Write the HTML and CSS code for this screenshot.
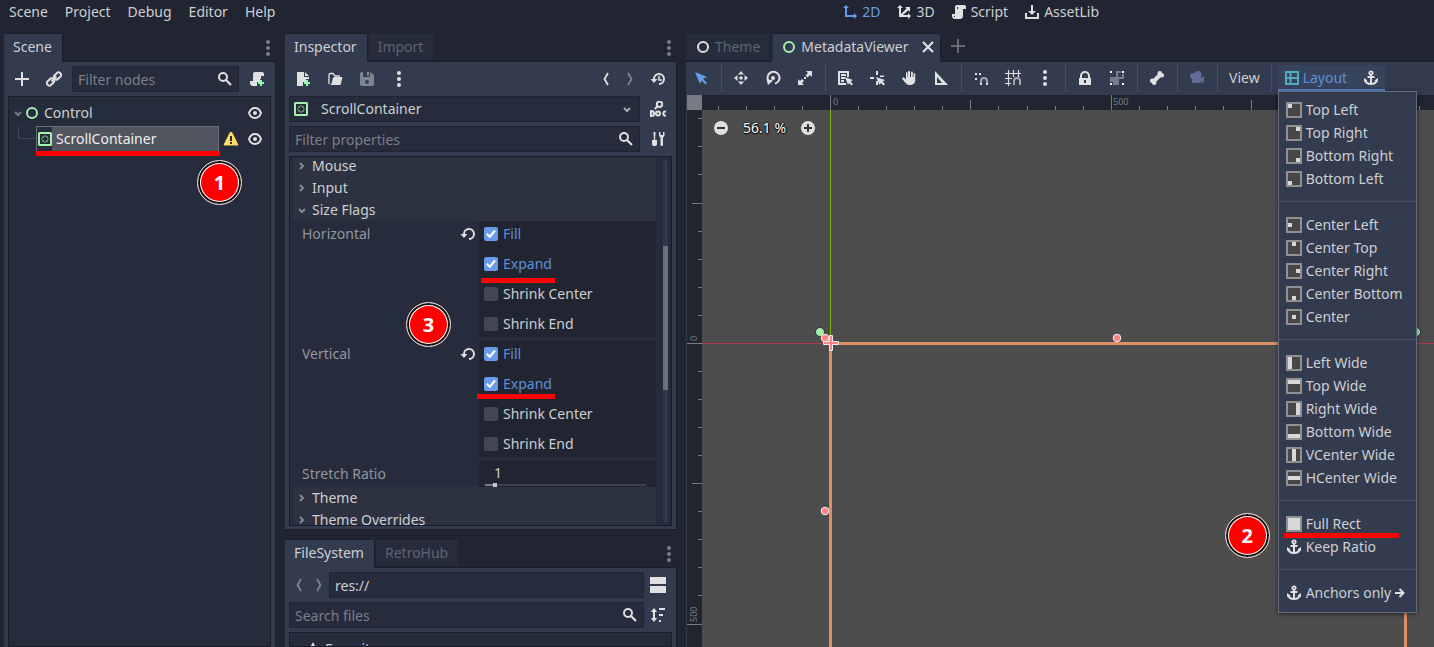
FILE: index.html
```html
<!DOCTYPE html>
<html lang="en">
<head>
<meta charset="utf-8">
<title>Godot Editor</title>
<link rel="stylesheet" href="styles.css">
</head>
<body>
<svg class="sprite" aria-hidden="true">
  <symbol id="dots" viewBox="0 0 16 16"><g fill="currentColor"><circle cx="8" cy="2" r="2"/><circle cx="8" cy="8" r="2"/><circle cx="8" cy="14" r="2"/></g></symbol>
  <symbol id="add" viewBox="0 0 16 16"><path fill="currentColor" d="M7 1h2v6h6v2H9v6H7V9H1V7h6z"/></symbol>
  <symbol id="link" viewBox="0 0 16 16"><g fill="none" stroke="currentColor" stroke-width="2"><rect x="7.5" y="2.5" width="8" height="5" rx="2.5" transform="rotate(-45 11.500 5)"/><rect x=".5" y="8.500" width="8" height="5" rx="2.500" transform="rotate(-45 4.500 11)"/><path d="M5.500 10.500l5-5"/></g></symbol>
  <symbol id="search" viewBox="0 0 16 16"><circle cx="6" cy="6" r="4" fill="none" stroke="currentColor" stroke-width="2"/><path d="M9 9l5 5" stroke="currentColor" stroke-width="2.200"/></symbol>
  <symbol id="script" viewBox="0 0 16 16"><path fill="currentColor" d="M6 1C4.900 1 4 1.900 4 3v7H1v2c0 1.700 1.300 3 3 3h5c1.700 0 3-1.300 3-3V5h3V3c0-1.100-.9-2-2-2z"/><path d="M6.500 3v2M3.500 12v1" stroke="#262c3b" stroke-width="1"/></symbol>
  <symbol id="script-add" viewBox="0 0 16 16"><path fill="currentColor" d="M6 1C4.900 1 4 1.900 4 3v7H1v2c0 1.700 1.300 3 3 3h4v-4h3V8h1V5h3V3c0-1.100-.9-2-2-2z"/><path fill="#84ffb1" d="M11 9h2v2h2v2h-2v2h-2v-2H9v-2h2z"/></symbol>
  <symbol id="ring" viewBox="0 0 16 16"><circle cx="8" cy="8" r="5" fill="none" stroke="currentColor" stroke-width="2"/></symbol>
  <symbol id="container" viewBox="0 0 16 16"><rect x="2" y="2" width="12" height="12" rx=".5" fill="none" stroke="#a5efac" stroke-width="2"/><path d="M5.500 6.500l1-1M9.500 5.500l1 1M10.500 9.500l-1 1M6.500 10.500l-1-1M7.500 5h1M7.500 11h1M5 7.500v1M11 7.500v1" fill="none" stroke="#a5efac" stroke-width="1.300"/></symbol>
  <symbol id="eye" viewBox="0 0 16 16"><circle cx="8" cy="8" r="2" fill="currentColor"/><path d="M2 8c1.200-3.500 3.400-5 6-5s4.800 1.500 6 5c-1.200 3.500-3.400 5-6 5S3.200 11.500 2 8z" fill="none" stroke="currentColor" stroke-width="2"/></symbol>
  <symbol id="warn" viewBox="0 0 16 16"><path fill="#ffdd65" d="M7.200 1.500h1.600L15 14H1z" stroke="#ffdd65" stroke-linejoin="round"/><path fill="#262c3b" d="M7 5h2v5H7zM7 11h2v2H7z"/></symbol>
  <symbol id="down" viewBox="0 0 16 16"><path d="M5 7l3 3 3-3" fill="none" stroke="currentColor" stroke-width="2"/></symbol>
  <symbol id="right" viewBox="0 0 16 16"><path d="M6 5l3 3-3 3" fill="none" stroke="currentColor" stroke-width="2"/></symbol>
  <symbol id="back" viewBox="0 0 16 16"><path d="M10 2L6.500 8l3.500 6" fill="none" stroke="currentColor" stroke-width="1.800"/></symbol>
  <symbol id="forward" viewBox="0 0 16 16"><path d="M6 2l3.500 6L6 14" fill="none" stroke="currentColor" stroke-width="1.800"/></symbol>
  <symbol id="new" viewBox="0 0 16 16"><path fill="currentColor" d="M2 1h7v5h5v2h-3v3H8v4H2zM10 1l4 4h-4z"/><path fill="#84ffb1" d="M11 9h2v2h2v2h-2v2h-2v-2H9v-2h2z"/></symbol>
  <symbol id="open" viewBox="0 0 16 16"><path d="M2 13V4c0-1 .4-1.500 1.500-1.500H6L8 5h5" fill="none" stroke="currentColor" stroke-width="1.300"/><path fill="currentColor" d="M7 6h8.500l-2 8H2.500c1.500-.5 2-1 2.300-2.500L6 7z"/></symbol>
  <symbol id="save" viewBox="0 0 16 16"><path fill="currentColor" fill-rule="evenodd" d="M1 3c0-1.100.9-2 2-2h1v5h7V1l4 3v9c0 1.100-.9 2-2 2H3c-1.100 0-2-.9-2-2zM8 9a2 2 0 100 4 2 2 0 000-4zM8 1h2v4H8z"/></symbol>
  <symbol id="history" viewBox="0 0 16 16"><path d="M4 9V8a5 5 0 115 5" fill="none" stroke="currentColor" stroke-width="2"/><path fill="currentColor" d="M.5 8h7L4 12z"/><path d="M9 5v4h3" fill="none" stroke="currentColor" stroke-width="1.600"/></symbol>
  <symbol id="doc" viewBox="0 0 16 16"><circle cx="9.500" cy="3.200" r="2.700" fill="none" stroke="currentColor" stroke-width="2"/><path d="M7.500 5.200L4.800 8" stroke="currentColor" stroke-width="2"/><g fill="none" stroke="currentColor" stroke-width="2"><path d="M1 10v5h.5c3.400 0 3.400-5 0-5z"/><path d="M16 10.500c-3.600-1-3.600 5 0 4"/><circle cx="8" cy="12.500" r="2"/></g></symbol>
  <symbol id="tools" viewBox="0 0 16 16"><path fill="currentColor" d="M3.500 1h2v3L5.200 5v4H7v4c0 1.500-1 2-2.500 2S2 14.500 2 13V9h1.800V5l-.3-1zM9 1v3c0 1.300.6 2 1.500 2.500V14c0 1.300 2.500 1.300 2.500 0V6.500C14 6 14.500 5.300 14.500 4V1H13v3h-2.500V1z"/></symbol>
  <symbol id="revert" viewBox="0 0 16 16"><path d="M4 9V8a5 5 0 115 5" fill="none" stroke="currentColor" stroke-width="2"/><path fill="currentColor" d="M.5 8h7L4 12z"/></symbol>
  <symbol id="split" viewBox="0 0 16 16"><path fill="currentColor" d="M0 0h16v7H0zM0 9h16v7H0z"/></symbol>
  <symbol id="sort" viewBox="0 0 16 16"><path fill="currentColor" d="M4 1l3.200 4H5v6h2.200L4 15 .8 11H3V5H.8zM9 1h6v2H9zM9 7h4v2H9zM9 13h2v2H9z"/></symbol>
  <symbol id="star" viewBox="0 0 16 16"><path fill="currentColor" d="M8 1l2.300 4.500 5 .8-3.600 3.500.8 5L8 12.500l-4.500 2.300.8-5L.7 6.300l5-.8z"/></symbol>
  <symbol id="two" viewBox="0 0 16 16"><path fill="currentColor" d="M4 1l3 3H5v7h7V9l3 3-3 3v-2H3V4H1z"/></symbol>
  <symbol id="three" viewBox="0 0 16 16"><path fill="currentColor" d="M4 1l3 3H5v6l5.500-5.500L9 3h5v5l-1.500-1.800L7 11h5V9l3 3-3 3v-2H3V4H1z"/></symbol>
  <symbol id="asset" viewBox="0 0 16 16"><path fill="currentColor" d="M7 1h2v6h3l-4 4-4-4h3zM1 9h2v4h10V9h2v6H1z"/></symbol>
  <symbol id="close" viewBox="0 0 16 16"><path d="M3 3l10 10M13 3L3 13" stroke="currentColor" stroke-width="2.200"/></symbol>
  <symbol id="select" viewBox="0 0 16 16"><path fill="currentColor" d="M2 2l12 5-4 1.800L14 13l-1.500 1.500-4-4L7 14z"/></symbol>
  <symbol id="move" viewBox="0 0 16 16"><path fill="currentColor" d="M8 1l3 3.500H5zM8 15l3-3.500H5zM1 8l3.500-3v6zM15 8l-3.500-3v6z"/><circle cx="8" cy="8" r="1.800" fill="currentColor"/></symbol>
  <symbol id="rotate" viewBox="0 0 16 16"><path d="M4.200 12A6 6 0 1110 13.600" fill="none" stroke="currentColor" stroke-width="2"/><path fill="currentColor" d="M1.500 9.500l6 .5v1L3 15z"/><circle cx="8" cy="8" r="2" fill="currentColor"/></symbol>
  <symbol id="scale" viewBox="0 0 16 16"><path fill="currentColor" d="M9 1h6v6l-2-2-2.500 2.500-2-2L11 3zM1 9l2 2 2-2 2 2-2 2 2 2H1z"/><path fill="currentColor" d="M7 7h2v2H7z"/></symbol>
  <symbol id="list" viewBox="0 0 16 16"><path d="M9 14H2V2h9v5M4 5h5M4 8h4M4 11h3" fill="none" stroke="currentColor" stroke-width="2"/><path fill="currentColor" d="M8 7l8 3-2.500 1.500L16 14l-1.500 1.500-2.500-2.500L11 15z"/></symbol>
  <symbol id="pivot" viewBox="0 0 16 16"><path fill="currentColor" d="M7 1h2v4H7zM7 11h2v4H7zM1 7h4v2H1zM11 5.500h4v1.500h-4zM7 7l9 3-2.500 1.500L16 14l-1.500 1.500-2.500-2.500L10.500 15z"/></symbol>
  <symbol id="pan" viewBox="0 0 16 16"><path fill="currentColor" d="M8 1c.7 0 1 .4 1 1v5h1V2.500c0-1.300 1.800-1.300 1.800 0V7h.7V4c0-1.200 1.700-1.200 1.700 0v6.500C14.200 13.300 12 15 9 15c-3.500 0-4.500-2-6.500-4.500L1 8.500c0-1.500 2-1.500 3 0l1 1V3c0-1.200 1.500-1.200 1.500 0v4H7V2c0-.6.300-1 1-1z"/></symbol>
  <symbol id="ruler" viewBox="0 0 16 16"><path fill="currentColor" fill-rule="evenodd" d="M2 1l13 14H2zM4 7v6h5z"/></symbol>
  <symbol id="snap" viewBox="0 0 16 16"><path fill="currentColor" d="M2 3h2v2H2zM2 8h2v2H2zM6 3h2v2H6z"/><path d="M8 15v-4a3 3 0 016 0v4" fill="none" stroke="currentColor" stroke-width="2" opacity=".65"/><path d="M7 13h2v2H7zM13 13h2v2h-2z" fill="currentColor"/></symbol>
  <symbol id="snap-grid" viewBox="0 0 16 16"><path d="M0 3.500h16M0 8.500h7M0 13.500h6M3.500 0v16M8.500 0v7M13.500 0v7" stroke="currentColor" stroke-width="1.200"/><path d="M9 15v-4a3 3 0 016 0v4" fill="none" stroke="currentColor" stroke-width="2" opacity=".65"/></symbol>
  <symbol id="lock" viewBox="0 0 16 16"><path fill="currentColor" fill-rule="evenodd" d="M2 8h1V6a5 5 0 0110 0v2h1v7H2zM5 8h6V6a3 3 0 00-6 0zM7 10v3h2v-3z"/></symbol>
  <symbol id="group" viewBox="0 0 16 16"><path fill="#777d8a" fill-rule="evenodd" d="M7 1h8v8h-5v6H1V7h6zM9 3v4h1v0h3V3z"/><path fill="#333b4f" d="M0 0h4v4H0zM12 0h4v4h-4zM0 12h4v4H0zM12 12h4v4h-4z"/><path fill="currentColor" d="M1 1h2v2H1zM13 1h2v2h-2zM1 13h2v2H1zM13 13h2v2h-2z"/></symbol>
  <symbol id="bone" viewBox="0 0 16 16"><path d="M4.500 11.500l7-7" stroke="currentColor" stroke-width="4"/><g fill="currentColor"><circle cx="10.800" cy="3.200" r="2.300"/><circle cx="12.800" cy="5.200" r="2.300"/><circle cx="3.200" cy="10.800" r="2.300"/><circle cx="5.200" cy="12.800" r="2.300"/></g></symbol>
  <symbol id="camera" viewBox="0 0 16 16"><g fill="#606c96"><circle cx="9" cy="4.500" r="3.500"/><circle cx="4" cy="6" r="3"/><rect x="3" y="5" width="9" height="8" rx="1"/><path d="M11 9l4-3v7l-4-2z"/></g></symbol>
  <symbol id="grid" viewBox="0 0 16 16"><path d="M2 2h12v12H2zM6.500 2v12M2 8h12" fill="none" stroke="#4fabbd" stroke-width="2"/></symbol>
  <symbol id="anchor" viewBox="0 0 16 16"><circle cx="8" cy="3" r="1.700" fill="none" stroke="currentColor" stroke-width="1.800"/><path d="M8 5v9M4.500 7h7M2 9.500C2.500 12.500 5 14 8 14s5.500-1.500 6-4.500" fill="none" stroke="currentColor" stroke-width="2"/><path fill="currentColor" d="M1 8l3.500 2.500L1 12zM15 8l-3.500 2.500L15 12z"/></symbol>
  <symbol id="arrow" viewBox="0 0 10 10"><path d="M0 5h8M4.500 1l4 4-4 4" fill="none" stroke="currentColor" stroke-width="2"/></symbol>
  <symbol id="minus-round" viewBox="0 0 16 16"><circle cx="8" cy="8" r="7" fill="#e0e0e0"/><path d="M4 8h8" stroke="#333" stroke-width="2"/></symbol>
  <symbol id="plus-round" viewBox="0 0 16 16"><circle cx="8" cy="8" r="7" fill="#e0e0e0"/><path d="M4 8h8M8 4v8" stroke="#333" stroke-width="2"/></symbol>
  <symbol id="frame" viewBox="0 0 16 16"><path fill="#474747" stroke="#919191" stroke-width="2" d="M1 1h14v14H1z"/></symbol>
</svg>

<div class="editor">
  <header class="menubar">
    <nav class="menus">
      <button>Scene</button><button>Project</button><button>Debug</button><button>Editor</button><button>Help</button>
    </nav>
    <nav class="screens">
      <button class="active"><svg class="icon"><use href="#two"/></svg>2D</button>
      <button><svg class="icon"><use href="#three"/></svg>3D</button>
      <button><svg class="icon"><use href="#script"/></svg>Script</button>
      <button><svg class="icon"><use href="#asset"/></svg>AssetLib</button>
    </nav>
  </header>

  <main class="workspace">
    <section class="dock scene-dock">
      <div class="tabs">
        <button class="tab selected">Scene</button>
        <button class="more" aria-label="Dock options"><svg class="icon"><use href="#dots"/></svg></button>
      </div>
      <div class="panel">
        <div class="tool-row">
          <button class="tool" aria-label="Add node"><svg class="icon"><use href="#add"/></svg></button>
          <button class="tool" aria-label="Instance scene"><svg class="icon"><use href="#link"/></svg></button>
          <div class="field"><input type="text" placeholder="Filter nodes" aria-label="Filter nodes"><svg class="icon"><use href="#search"/></svg></div>
          <button class="tool" aria-label="Attach script"><svg class="icon"><use href="#script-add"/></svg></button>
        </div>
        <div class="box tree">
          <div class="node">
            <svg class="icon fold"><use href="#down"/></svg>
            <span class="node-name"><svg class="icon green"><use href="#ring"/></svg>Control</span>
            <button class="mini" aria-label="Toggle Control"><svg class="icon"><use href="#eye"/></svg></button>
          </div>
          <div class="node child">
            <span class="branch"></span>
            <span class="node-name chosen"><span class="icon-bed"><svg class="icon"><use href="#container"/></svg></span>ScrollContainer<i class="mark mark-node"></i></span>
            <button class="mini" aria-label="Warning"><svg class="icon"><use href="#warn"/></svg></button>
            <button class="mini" aria-label="Toggle ScrollContainer"><svg class="icon"><use href="#eye"/></svg></button>
            <b class="step step-one">1</b>
          </div>
        </div>
      </div>
    </section>

    <div class="column">
      <section class="dock inspector-dock">
        <div class="tabs">
          <button class="tab selected">Inspector</button><button class="tab">Import</button>
          <button class="more" aria-label="Dock options"><svg class="icon"><use href="#dots"/></svg></button>
        </div>
        <div class="panel">
          <div class="tool-row">
            <button class="tool" aria-label="New resource"><svg class="icon"><use href="#new"/></svg></button>
            <button class="tool" aria-label="Open resource"><svg class="icon"><use href="#open"/></svg></button>
            <button class="tool dim" aria-label="Save resource"><svg class="icon"><use href="#save"/></svg></button>
            <button class="tool" aria-label="Resource options"><svg class="icon"><use href="#dots"/></svg></button>
            <span class="spacer"></span>
            <button class="tool narrow" aria-label="Previous object"><svg class="icon"><use href="#back"/></svg></button>
            <button class="tool narrow dim" aria-label="Next object"><svg class="icon"><use href="#forward"/></svg></button>
            <button class="tool" aria-label="History"><svg class="icon"><use href="#history"/></svg></button>
          </div>
          <div class="tool-row">
            <div class="field picker"><svg class="icon"><use href="#container"/></svg><select aria-label="Edited object"><option>ScrollContainer</option></select><svg class="icon chevron"><use href="#down"/></svg></div>
            <button class="tool" aria-label="Open documentation"><svg class="icon"><use href="#doc"/></svg></button>
          </div>
          <div class="tool-row">
            <div class="field"><input type="text" placeholder="Filter properties" aria-label="Filter properties"><svg class="icon"><use href="#search"/></svg></div>
            <button class="tool" aria-label="Tools"><svg class="icon"><use href="#tools"/></svg></button>
          </div>
          <div class="box properties">
            <div class="property-list">
              <button class="group-head"><svg class="icon"><use href="#right"/></svg>Mouse</button>
              <button class="group-head"><svg class="icon"><use href="#right"/></svg>Input</button>
              <button class="group-head"><svg class="icon"><use href="#down"/></svg>Size Flags</button>
              <div class="property">
                <span class="property-name">Horizontal<svg class="icon"><use href="#revert"/></svg></span>
                <div class="values">
                  <label class="on"><input type="checkbox" checked>Fill</label>
                  <label class="on"><input type="checkbox" checked>Expand<i class="mark mark-horizontal"></i></label>
                  <label><input type="checkbox">Shrink Center</label>
                  <label><input type="checkbox">Shrink End</label>
                </div>
                <b class="step step-three">3</b>
              </div>
              <div class="property">
                <span class="property-name">Vertical<svg class="icon"><use href="#revert"/></svg></span>
                <div class="values">
                  <label class="on"><input type="checkbox" checked>Fill</label>
                  <label class="on"><input type="checkbox" checked>Expand<i class="mark mark-vertical"></i></label>
                  <label><input type="checkbox">Shrink Center</label>
                  <label><input type="checkbox">Shrink End</label>
                </div>
              </div>
              <div class="property last">
                <label class="property-name" for="ratio">Stretch Ratio</label>
                <div class="values number"><input id="ratio" type="text" value="1"><input class="slider" type="range" min="0" max="20" value="1" aria-label="Stretch Ratio slider"></div>
              </div>
              <button class="group-head"><svg class="icon"><use href="#right"/></svg>Theme</button>
              <button class="group-head"><svg class="icon"><use href="#right"/></svg>Theme Overrides</button>
            </div>
            <div class="scrollbar"><span></span></div>
          </div>
        </div>
      </section>

      <section class="dock files-dock">
        <div class="tabs">
          <button class="tab selected">FileSystem</button><button class="tab">RetroHub</button>
          <button class="more" aria-label="Dock options"><svg class="icon"><use href="#dots"/></svg></button>
        </div>
        <div class="panel">
          <div class="tool-row">
            <button class="tool slim dim" aria-label="Back"><svg class="icon"><use href="#back"/></svg></button>
            <button class="tool slim dim" aria-label="Forward"><svg class="icon"><use href="#forward"/></svg></button>
            <div class="field path"><input type="text" value="res://" aria-label="Path"></div>
            <button class="tool side" aria-label="Split mode"><svg class="icon"><use href="#split"/></svg></button>
          </div>
          <div class="tool-row">
            <div class="field"><input type="text" placeholder="Search files" aria-label="Search files"><svg class="icon"><use href="#search"/></svg></div>
            <button class="tool side" aria-label="Sort files"><svg class="icon"><use href="#sort"/></svg></button>
          </div>
          <div class="box favorites"><svg class="icon"><use href="#star"/></svg>Favorites:</div>
        </div>
      </section>
    </div>

    <section class="viewport">
      <div class="tabs">
        <button class="tab scene-tab"><svg class="icon"><use href="#ring"/></svg>Theme</button>
        <button class="tab scene-tab selected"><svg class="icon green"><use href="#ring"/></svg>MetadataViewer<svg class="icon close"><use href="#close"/></svg></button>
        <button class="new-tab" aria-label="New scene"><svg class="icon"><use href="#add"/></svg></button>
      </div>
      <div class="toolbar">
        <button class="tool active" aria-label="Select"><svg class="icon"><use href="#select"/></svg></button>
        <span class="rule"></span>
        <button class="tool" aria-label="Move"><svg class="icon"><use href="#move"/></svg></button>
        <button class="tool" aria-label="Rotate"><svg class="icon"><use href="#rotate"/></svg></button>
        <button class="tool" aria-label="Scale"><svg class="icon"><use href="#scale"/></svg></button>
        <span class="rule"></span>
        <button class="tool" aria-label="List select"><svg class="icon"><use href="#list"/></svg></button>
        <button class="tool" aria-label="Pivot"><svg class="icon"><use href="#pivot"/></svg></button>
        <button class="tool" aria-label="Pan"><svg class="icon"><use href="#pan"/></svg></button>
        <button class="tool" aria-label="Ruler"><svg class="icon"><use href="#ruler"/></svg></button>
        <span class="rule"></span>
        <button class="tool" aria-label="Smart snap"><svg class="icon"><use href="#snap"/></svg></button>
        <button class="tool" aria-label="Grid snap"><svg class="icon"><use href="#snap-grid"/></svg></button>
        <button class="tool" aria-label="Snap options"><svg class="icon"><use href="#dots"/></svg></button>
        <span class="rule"></span>
        <button class="tool" aria-label="Lock"><svg class="icon"><use href="#lock"/></svg></button>
        <button class="tool white" aria-label="Group"><svg class="icon"><use href="#group"/></svg></button>
        <span class="rule"></span>
        <button class="tool" aria-label="Skeleton"><svg class="icon"><use href="#bone"/></svg></button>
        <span class="rule"></span>
        <button class="tool" aria-label="Camera override"><svg class="icon"><use href="#camera"/></svg></button>
        <span class="rule"></span>
        <button class="text-tool">View</button>
        <span class="rule"></span>
        <div class="layout-tools">
          <button class="text-tool layout-button"><svg class="icon"><use href="#grid"/></svg>Layout</button>
          <button class="tool" aria-label="Anchor mode"><svg class="icon"><use href="#anchor"/></svg></button>
          <div class="popup" role="menu">
            <button role="menuitem"><svg class="icon"><use href="#frame"/><path d="M2 2h4v4H2z"/></svg>Top Left</button>
            <button role="menuitem"><svg class="icon"><use href="#frame"/><path d="M10 2h4v4h-4z"/></svg>Top Right</button>
            <button role="menuitem"><svg class="icon"><use href="#frame"/><path d="M10 10h4v4h-4z"/></svg>Bottom Right</button>
            <button role="menuitem"><svg class="icon"><use href="#frame"/><path d="M2 10h4v4H2z"/></svg>Bottom Left</button>
            <hr>
            <button role="menuitem"><svg class="icon"><use href="#frame"/><path d="M2 6h4v4H2z"/></svg>Center Left</button>
            <button role="menuitem"><svg class="icon"><use href="#frame"/><path d="M6 2h4v4H6z"/></svg>Center Top</button>
            <button role="menuitem"><svg class="icon"><use href="#frame"/><path d="M10 6h4v4h-4z"/></svg>Center Right</button>
            <button role="menuitem"><svg class="icon"><use href="#frame"/><path d="M6 10h4v4H6z"/></svg>Center Bottom</button>
            <button role="menuitem"><svg class="icon"><use href="#frame"/><path d="M6 6h4v4H6z"/></svg>Center</button>
            <hr>
            <button role="menuitem"><svg class="icon"><use href="#frame"/><path d="M2 2h4v12H2z"/></svg>Left Wide</button>
            <button role="menuitem"><svg class="icon"><use href="#frame"/><path d="M2 2h12v4H2z"/></svg>Top Wide</button>
            <button role="menuitem"><svg class="icon"><use href="#frame"/><path d="M10 2h4v12h-4z"/></svg>Right Wide</button>
            <button role="menuitem"><svg class="icon"><use href="#frame"/><path d="M2 10h12v4H2z"/></svg>Bottom Wide</button>
            <button role="menuitem"><svg class="icon"><use href="#frame"/><path d="M6 2h4v12H6z"/></svg>VCenter Wide</button>
            <button role="menuitem"><svg class="icon"><use href="#frame"/><path d="M2 6h12v4H2z"/></svg>HCenter Wide</button>
            <hr>
            <button role="menuitem"><svg class="icon"><use href="#frame"/><path d="M2 2h12v12H2z"/></svg>Full Rect<i class="mark mark-full"></i><b class="step step-two">2</b></button>
            <button role="menuitem"><svg class="icon"><use href="#anchor"/></svg>Keep Ratio</button>
            <hr>
            <button role="menuitem"><svg class="icon"><use href="#anchor"/></svg>Anchors only<svg class="submenu"><use href="#arrow"/></svg></button>
          </div>
        </div>
      </div>
      <div class="canvas">
        <svg class="stage">
          <path stroke="#79b20f" d="M143.500 15V248"/>
          <path stroke="#b03a50" d="M15 248.500H3000"/>
          <path fill="none" stroke="#de9064" stroke-width="3" d="M143.500 248.500H718.500V585H143.500z"/>
          <g class="anchors"><circle cx="133" cy="237" r="4.500"/><circle cx="729" cy="237" r="4.500"/></g>
          <g class="handles"><circle cx="138" cy="243" r="3.800"/><circle cx="430" cy="243" r="3.800"/><circle cx="138" cy="416" r="3.800"/></g>
          <path fill="#ff8484" stroke="#eee" d="M142.500 240.500h3v6h6v3h-6v6h-3v-6h-6v-3h6z"/>
          <path fill="#202531" d="M0 0H3000V15H15V3000H0z"/>
          <path fill="#777b86" d="M0 0h15v15H0z"/>
          <path class="ticks" d="M31.500 11v4M59.500 11v4M87.500 11v4M115.500 11v4M143.500 0v15M171.500 11v4M199.500 11v4M227.500 11v4M255.500 11v4M283.500 5v10M311.500 11v4M340.500 11v4M368.500 11v4M396.500 11v4M424.500 0v15M452.500 11v4M480.500 11v4M508.500 11v4M536.500 11v4M564.500 5v10M732.500 11v4"/>
          <path class="ticks" d="M11 23.500h4M11 51.500h4M11 79.500h4M5 108.500h10M11 136.500h4M11 164.500h4M11 192.500h4M11 220.500h4M0 248.500h15M11 276.500h4M11 304.500h4M11 332.500h4M11 360.500h4M5 388.500h10M11 416.500h4M11 444.500h4M11 472.500h4M11 500.500h4M0 529.500h15"/>
          <g class="ruler-text"><text x="146" y="10">0</text><text x="426" y="10">500</text><text transform="translate(10 246) rotate(-90)">0</text><text transform="translate(10 527) rotate(-90)">500</text></g>
        </svg>
        <div class="zoom">
          <button aria-label="Zoom out"><svg class="icon"><use href="#minus-round"/></svg></button>
          <button class="percent">56.1 %</button>
          <button aria-label="Zoom in"><svg class="icon"><use href="#plus-round"/></svg></button>
        </div>
      </div>
    </section>
  </main>
</div>
</body>
</html>
```

FILE: styles.css
```css
:root {
  --base: #333b4f;
  --dark: #262c3b;
  --darker: #202531;
  --edge: #191d27;
  --text: #cdcfd2;
  --accent: #699ce8;
  --link: #5f8fd9;
}
* { box-sizing: border-box; }
body {
  margin: 0;
  background: var(--darker);
  color: var(--text);
  font: 14px/20px "Noto Sans", sans-serif;
}
button, input, select {
  margin: 0;
  padding: 0;
  border: 0;
  background: none;
  color: inherit;
  font: inherit;
  outline: 0;
}
button { white-space: nowrap; }
.sprite { position: absolute; width: 0; height: 0; }
.icon { display: block; flex: none; width: 16px; height: 16px; color: #e0e0e0; }
.green { color: #a5efac; }

.editor { display: flex; flex-direction: column; height: 100vh; overflow: hidden; }
.menubar { display: flex; justify-content: space-between; height: 34px; padding: 2px 335px 0 9px; }
.menus, .screens { display: flex; align-items: flex-start; gap: 16px; }
.menus { gap: 17px; }
.screens button { display: flex; align-items: center; gap: 4px; }
.screens .active, .screens .active .icon { color: var(--accent); }

.workspace { display: flex; flex: 1; gap: 9px; min-height: 0; padding-left: 4px; }
.column { display: flex; flex-direction: column; flex: none; gap: 10px; width: 392px; min-height: 0; }
.dock { display: flex; flex-direction: column; min-height: 0; }
.scene-dock { flex: none; width: 272px; }
.inspector-dock { flex: 1; }
.files-dock { flex: none; height: 107px; }

.tabs { display: flex; flex: none; height: 27px; gap: 2px; }
.tab {
  height: 26px;
  padding: 0 10px 0 9px;
  background: var(--dark);
  color: #5f6470;
}
.tab.selected {
  position: relative;
  height: 28px;
  padding-bottom: 2px;
  background: var(--base);
  color: var(--text);
  box-shadow: 0 -1px 0 var(--edge), 1px 0 0 var(--edge);
  clip-path: inset(-1px -1px 0 0);
}
.more { margin-left: auto; }
.more .icon { color: #7a7d86; }
.panel {
  display: flex;
  flex-direction: column;
  flex: 1;
  gap: 4px;
  min-height: 0;
  padding: 4px;
  background: var(--base);
  border: solid var(--edge);
  border-width: 1px 1px 1px 0;
}
.inspector-dock .panel { padding-bottom: 3px; }
.scene-dock .panel, .files-dock .panel { padding-bottom: 0; border-bottom: 0; }
.tool-row { display: flex; flex: none; align-items: center; gap: 4px; height: 26px; }
.tool { display: flex; flex: none; align-items: center; justify-content: center; width: 28px; height: 26px; }
.narrow { width: 20px; }
.slim { width: 16px; }
.slim:first-child { margin-left: 2px; }
.side { width: 24px; padding-right: 4px; }
.dim .icon { color: #7f8490; }
.spacer { flex: 1; }
.field {
  display: flex;
  flex: 1;
  align-items: center;
  min-width: 0;
  height: 26px;
  padding: 0 5px;
  background: var(--dark);
  border: 1px solid var(--darker);
}
.path { margin-left: -2px; }
.field input, .field select { flex: 1; min-width: 0; height: 24px; appearance: none; }
.field input::placeholder { color: #7b7f89; opacity: 1; }
.picker { gap: 12px; padding: 0 4px 0 3px; }
.chevron { color: #a9acb3; }
.box { flex: 1; min-height: 0; background: var(--dark); border: 1px solid var(--edge); }

.tree { padding: 3px 7px 0 1px; }
.node { position: relative; display: flex; align-items: center; height: 26px; }
.fold { color: #777b86; }
.node-name { display: flex; flex: 1; align-items: center; gap: 4px; height: 26px; margin-left: -2px; }
.branch {
  flex: none;
  align-self: flex-start;
  width: 18px;
  height: 13px;
  margin-left: 8px;
  border: solid #3f4554;
  border-width: 0 0 1px 1px;
}
.chosen {
  position: relative;
  margin: 0 4px 0 0;
  background: #515560;
  border: solid #6b6f7a;
  border-width: 1px;
  color: #eee;
}
.icon-bed { display: flex; align-items: center; justify-content: center; width: 15px; height: 24px; background: var(--dark); }
.mini { flex: none; width: 16px; }
.mini + .mini { margin-left: 8px; }

.mark { position: absolute; height: 5px; background: #ff0000; }
.mark-node { left: -1px; right: -2px; bottom: -5px; }
.mark-horizontal { left: 2px; width: 74px; bottom: -6px; }
.mark-vertical { left: -2px; width: 78px; bottom: -2px; }
.mark-full { left: 5px; width: 115px; bottom: -3px; }
.step {
  position: absolute;
  z-index: 3;
  width: 45px;
  height: 45px;
  border: 1px solid #ddd;
  border-radius: 50%;
  background: #ff0000;
  box-shadow: inset 0 0 0 2px #111, inset 0 0 0 3px #fff;
  color: #fff;
  font: bold 20px/43px "Noto Sans", sans-serif;
  text-align: center;
}
.step-one { left: 187px; top: 34px; }
.step-three { left: 113px; top: 81px; }
.step-two { left: -54px; top: 1px; }

.properties { display: flex; overflow: hidden; padding-left: 3px; }
.property-list { flex: 1; margin-top: -2px; }
.group-head {
  display: flex;
  align-items: center;
  gap: 2px;
  width: 100%;
  height: 22px;
  padding-left: 1px;
  background: #2d3241;
}
.group-head .icon { color: #858993; }
.property {
  position: relative;
  display: grid;
  grid-template-columns: 186px 1fr;
  padding-bottom: 4px;
}
.property.last { padding: 0; }
.property-name {
  display: flex;
  justify-content: space-between;
  align-items: center;
  height: 26px;
  padding: 0 3px 0 9px;
  color: #93969d;
}
.values { display: flex; flex-direction: column; gap: 4px; background: var(--darker); }
.values label { position: relative; display: flex; align-items: center; gap: 5px; height: 26px; padding-left: 5px; }
.values .on { color: var(--link); }
.values input[type="checkbox"] {
  position: relative;
  width: 14px;
  height: 14px;
  appearance: none;
  border-radius: 2px;
  background: #424650;
}
.values input[type="checkbox"]:checked { background: var(--accent); }
.values input[type="checkbox"]:checked::before {
  content: "";
  position: absolute;
  inset: 2px;
  background: #fff;
  clip-path: polygon(0 55%, 15% 40%, 37% 62%, 82% 8%, 98% 22%, 39% 92%);
}
.number { height: 26px; padding: 1px 10px 0 6px; gap: 0; }
.number input { height: 21px; width: 100%; }
.number input[type="text"] { padding-left: 9px; }
.number .slider {
  flex: none;
  height: 4px;
  appearance: none;
  background: linear-gradient(90deg, #777b84 9px, #3f424d 9px) center / 100% 2px no-repeat;
}
.slider::-webkit-slider-thumb { appearance: none; width: 4px; height: 4px; background: #c5c7ca; }
.scrollbar { display: flex; flex: none; width: 15px; padding: 3px 3px 3px 7px; background: var(--dark); }
.scrollbar span { flex: 1; border-radius: 3px; background: linear-gradient(#6d717e, #6d717e) 0 86px / 100% 144px no-repeat #323848; }
.favorites { display: flex; gap: 4px; padding: 6px 0 0 15px; overflow: hidden; }
.favorites .icon { margin-top: 2px; }

.viewport { display: flex; flex: 1; flex-direction: column; min-width: 0; background: var(--base); }
.viewport .tabs { height: 28px; background: var(--darker); box-shadow: inset 0 -1px 0 var(--edge); }
.scene-tab { display: flex; align-items: center; gap: 4px; }
.scene-tab .close { margin-left: 7px; }
.scene-tab.selected { padding-right: 4px; }
.new-tab { padding: 0 8px 4px; }
.new-tab .icon { color: #686b70; }
.toolbar { display: flex; align-items: center; gap: 4px; height: 33px; padding: 0 0 1px 1px; }
.toolbar .tool.active .icon { color: var(--accent); }
.toolbar .white .icon { color: #fff; }
.rule { flex: none; width: 4px; height: 26px; background: linear-gradient(#484f61, #484f61) center / 1px 100% no-repeat; }
.text-tool { height: 26px; padding: 0 6px; }
.layout-tools { position: relative; display: flex; flex: none; height: 26px; background: #37425b; }
.layout-button { display: flex; align-items: center; gap: 3px; padding: 0 10px 0 6px; color: var(--link); }
.layout-tools::after { content: ""; position: absolute; z-index: 1; inset: auto 0 0; height: 2px; background: #5585c8; }
.popup {
  position: absolute;
  z-index: 2;
  left: 0;
  top: 26px;
  width: max-content;
  padding: 6px 0 8px;
  background: var(--base);
  border: 1px solid #626a7b;
  box-shadow: 0 1px 5px rgba(0, 0, 0, 0.5);
}
.popup button { position: relative; display: flex; align-items: center; gap: 4px; width: 100%; height: 23px; padding: 0 11px 0 7px; }
.popup hr { height: 1px; margin: 11px 0; border: 0; background: #484f61; }
.popup .icon path { fill: #d8d8d8; }
.submenu { width: 10px; height: 10px; color: #e0e0e0; }

.canvas { position: relative; flex: 1; min-height: 0; margin-left: 1px; overflow: hidden; background: #4d4d4d; }
.stage { display: block; width: 100%; height: 100%; }
.ticks { stroke: #777b86; }
.ruler-text { fill: #777b86; font: 9px "Noto Sans", sans-serif; }
.anchors { fill: #a5efac; stroke: #2c332e; }
.handles { fill: #ff8484; stroke: #f4f4f4; }
.zoom { position: absolute; left: 26px; top: 23px; display: flex; align-items: center; gap: 14px; }
.percent { color: #fff; text-shadow: 0 0 2px #000, 0 1px 1px #000, 1px 0 1px #000; }
```
